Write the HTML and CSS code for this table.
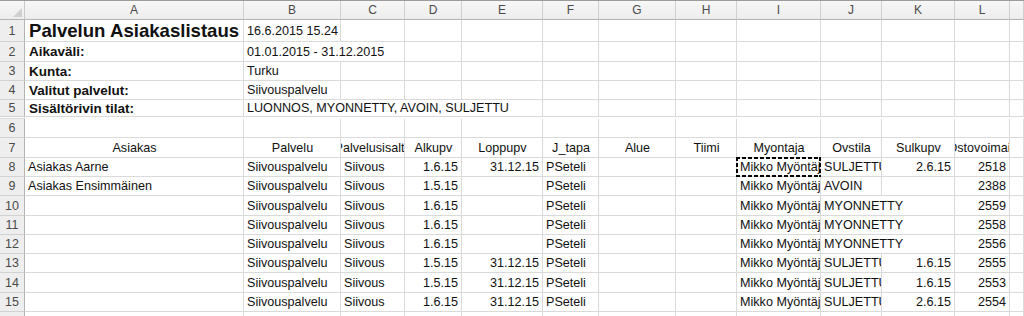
FILE: index.html
```html
<!DOCTYPE html>
<html lang="fi">
<head>
<meta charset="utf-8">
<title>Palvelun Asiakaslistaus</title>
<link rel="stylesheet" href="styles.css">
</head>
<body>
<div class="sheet">
  <div class="row colhdr">
    <div class="corner"><svg width="9" height="9" viewBox="0 0 9 9"><polygon points="9,0 9,9 0,9" fill="#cfcfcf"/></svg></div>
    <div class="ch">A</div><div class="ch">B</div><div class="ch">C</div><div class="ch">D</div><div class="ch">E</div><div class="ch">F</div><div class="ch">G</div><div class="ch">H</div><div class="ch">I</div><div class="ch">J</div><div class="ch">K</div><div class="ch">L</div><div class="ch"></div>
  </div>

  <div class="row h22">
    <div class="rh">1</div>
    <div class="c title">Palvelun Asiakaslistaus</div>
    <div class="c">16.6.2015 15.24</div>
    <div class="c"></div><div class="c"></div><div class="c"></div><div class="c"></div><div class="c"></div><div class="c"></div><div class="c"></div><div class="c"></div><div class="c"></div><div class="c"></div><div class="c"></div>
  </div>

  <div class="row h20">
    <div class="rh">2</div>
    <div class="c b">Aikaväli:</div>
    <div class="c span2">01.01.2015 - 31.12.2015</div>
    <div class="c"></div><div class="c"></div><div class="c"></div><div class="c"></div><div class="c"></div><div class="c"></div><div class="c"></div><div class="c"></div><div class="c"></div><div class="c"></div>
  </div>

  <div class="row h19">
    <div class="rh">3</div>
    <div class="c b">Kunta:</div>
    <div class="c">Turku</div>
    <div class="c"></div><div class="c"></div><div class="c"></div><div class="c"></div><div class="c"></div><div class="c"></div><div class="c"></div><div class="c"></div><div class="c"></div><div class="c"></div><div class="c"></div>
  </div>

  <div class="row h19">
    <div class="rh">4</div>
    <div class="c b">Valitut palvelut:</div>
    <div class="c">Siivouspalvelu</div>
    <div class="c"></div><div class="c"></div><div class="c"></div><div class="c"></div><div class="c"></div><div class="c"></div><div class="c"></div><div class="c"></div><div class="c"></div><div class="c"></div><div class="c"></div>
  </div>

  <div class="row h19">
    <div class="rh">5</div>
    <div class="c b">Sisältörivin tilat:</div>
    <div class="c span4">LUONNOS, MYONNETTY, AVOIN, SULJETTU</div>
    <div class="c"></div><div class="c"></div><div class="c"></div><div class="c"></div><div class="c"></div><div class="c"></div><div class="c"></div><div class="c"></div><div class="c"></div>
  </div>

  <div class="row h19">
    <div class="rh">6</div>
    <div class="c"></div><div class="c"></div><div class="c"></div><div class="c"></div><div class="c"></div><div class="c"></div><div class="c"></div><div class="c"></div><div class="c"></div><div class="c"></div><div class="c"></div><div class="c"></div><div class="c"></div>
  </div>

  <div class="row h20">
    <div class="rh">7</div>
    <div class="c ctr"><span>Asiakas</span></div>
    <div class="c ctr"><span>Palvelu</span></div>
    <div class="c ctr"><span>Palvelusisalto</span></div>
    <div class="c ctr"><span>Alkupv</span></div>
    <div class="c ctr"><span>Loppupv</span></div>
    <div class="c ctr"><span>J_tapa</span></div>
    <div class="c ctr"><span>Alue</span></div>
    <div class="c ctr"><span>Tiimi</span></div>
    <div class="c ctr"><span>Myontaja</span></div>
    <div class="c ctr"><span>Ovstila</span></div>
    <div class="c ctr"><span>Sulkupv</span></div>
    <div class="c ctr"><span>Ostovoimaid</span></div>
    <div class="c"></div>
  </div>

  <div class="row h19">
    <div class="rh">8</div>
    <div class="c">Asiakas Aarne</div>
    <div class="c">Siivouspalvelu</div>
    <div class="c">Siivous</div>
    <div class="c r">1.6.15</div>
    <div class="c r">31.12.15</div>
    <div class="c">PSeteli</div>
    <div class="c"></div><div class="c"></div>
    <div class="c copy"><span class="clip">Mikko Myöntäjä</span></div>
    <div class="c">SULJETTU</div>
    <div class="c r">2.6.15</div>
    <div class="c r">2518</div>
    <div class="c"></div>
  </div>

  <div class="row h19">
    <div class="rh">9</div>
    <div class="c">Asiakas Ensimmäinen</div>
    <div class="c">Siivouspalvelu</div>
    <div class="c">Siivous</div>
    <div class="c r">1.5.15</div>
    <div class="c r"></div>
    <div class="c">PSeteli</div>
    <div class="c"></div><div class="c"></div>
    <div class="c">Mikko Myöntäjä</div>
    <div class="c">AVOIN</div>
    <div class="c r"></div>
    <div class="c r">2388</div>
    <div class="c"></div>
  </div>

  <div class="row h20">
    <div class="rh">10</div>
    <div class="c"></div>
    <div class="c">Siivouspalvelu</div>
    <div class="c">Siivous</div>
    <div class="c r">1.6.15</div>
    <div class="c r"></div>
    <div class="c">PSeteli</div>
    <div class="c"></div><div class="c"></div>
    <div class="c">Mikko Myöntäjä</div>
    <div class="c span2">MYONNETTY</div>
    <div class="c r">2559</div>
    <div class="c"></div>
  </div>

  <div class="row h19">
    <div class="rh">11</div>
    <div class="c"></div>
    <div class="c">Siivouspalvelu</div>
    <div class="c">Siivous</div>
    <div class="c r">1.6.15</div>
    <div class="c r"></div>
    <div class="c">PSeteli</div>
    <div class="c"></div><div class="c"></div>
    <div class="c">Mikko Myöntäjä</div>
    <div class="c span2">MYONNETTY</div>
    <div class="c r">2558</div>
    <div class="c"></div>
  </div>

  <div class="row h19">
    <div class="rh">12</div>
    <div class="c"></div>
    <div class="c">Siivouspalvelu</div>
    <div class="c">Siivous</div>
    <div class="c r">1.6.15</div>
    <div class="c r"></div>
    <div class="c">PSeteli</div>
    <div class="c"></div><div class="c"></div>
    <div class="c">Mikko Myöntäjä</div>
    <div class="c span2">MYONNETTY</div>
    <div class="c r">2556</div>
    <div class="c"></div>
  </div>

  <div class="row h19">
    <div class="rh">13</div>
    <div class="c"></div>
    <div class="c">Siivouspalvelu</div>
    <div class="c">Siivous</div>
    <div class="c r">1.5.15</div>
    <div class="c r">31.12.15</div>
    <div class="c">PSeteli</div>
    <div class="c"></div><div class="c"></div>
    <div class="c">Mikko Myöntäjä</div>
    <div class="c">SULJETTU</div>
    <div class="c r">1.6.15</div>
    <div class="c r">2555</div>
    <div class="c"></div>
  </div>

  <div class="row h20">
    <div class="rh">14</div>
    <div class="c"></div>
    <div class="c">Siivouspalvelu</div>
    <div class="c">Siivous</div>
    <div class="c r">1.5.15</div>
    <div class="c r">31.12.15</div>
    <div class="c">PSeteli</div>
    <div class="c"></div><div class="c"></div>
    <div class="c">Mikko Myöntäjä</div>
    <div class="c">SULJETTU</div>
    <div class="c r">1.6.15</div>
    <div class="c r">2553</div>
    <div class="c"></div>
  </div>

  <div class="row h19">
    <div class="rh">15</div>
    <div class="c"></div>
    <div class="c">Siivouspalvelu</div>
    <div class="c">Siivous</div>
    <div class="c r">1.6.15</div>
    <div class="c r">31.12.15</div>
    <div class="c">PSeteli</div>
    <div class="c"></div><div class="c"></div>
    <div class="c">Mikko Myöntäjä</div>
    <div class="c">SULJETTU</div>
    <div class="c r">2.6.15</div>
    <div class="c r">2554</div>
    <div class="c"></div>
  </div>

  <div class="row h19">
    <div class="rh">16</div>
    <div class="c"></div><div class="c"></div><div class="c"></div><div class="c"></div><div class="c"></div><div class="c"></div><div class="c"></div><div class="c"></div><div class="c"></div><div class="c"></div><div class="c"></div><div class="c"></div><div class="c"></div>
  </div>
</div>
</body>
</html>
```

FILE: styles.css
```css
html, body {
  margin: 0;
  padding: 0;
  background: #ffffff;
  overflow: hidden;
}

.sheet {
  width: 1024px;
  font-family: "Liberation Sans", Arial, sans-serif;
  font-size: 12.6px;
  color: #111;
}

.row {
  display: grid;
  grid-template-columns: 25px 219px 97px 64px 57px 81px 56px 77px 61px 84px 61px 73px 55px 1fr;
}

.h19 { height: 19px; }
.h20 { height: 20px; }
.h22 { height: 22px; }

.colhdr {
  height: 20px;
  border-top: 1px solid #9c9c9c;
  box-sizing: border-box;
  background: linear-gradient(#f7f7f7, #ececec);
}

.corner {
  box-sizing: border-box;
  border-right: 1px solid #c9c9c9;
  border-bottom: 1px solid #b4b4b4;
  display: flex;
  align-items: flex-end;
  justify-content: flex-end;
  padding: 0 2px 2px 0;
}

.ch {
  box-sizing: border-box;
  border-right: 1px solid #d0d0d0;
  border-bottom: 1px solid #b4b4b4;
  display: flex;
  align-items: center;
  justify-content: center;
  color: #4a4a4a;
  font-size: 12px;
}

.rh {
  box-sizing: border-box;
  background: #eeeeee;
  border-right: 1px solid #b4b4b4;
  border-bottom: 1px solid #d2d2d2;
  display: flex;
  align-items: center;
  justify-content: center;
  color: #4a4a4a;
  font-size: 12.5px;
}

.c {
  position: relative;
  box-sizing: border-box;
  border-right: 1px solid #dadada;
  border-bottom: 1px solid #dadada;
  display: flex;
  align-items: center;
  padding: 0 2px 0 3px;
  white-space: nowrap;
  overflow: hidden;
}

.span2 { grid-column: span 2; }
.span4 { grid-column: span 4; }

.title {
  font-size: 18.6px;
  font-weight: bold;
  padding-left: 4px;
}

.b {
  font-weight: bold;
  font-size: 13.5px;
  padding-left: 4px;
}

.r { justify-content: flex-end; padding-right: 3px; }

.ctr { justify-content: center; }
.ctr span { flex: none; }

.copy {
  overflow: visible;
  padding-right: 0;
}
.clip {
  min-width: 0;
  overflow: hidden;
}
.copy::after {
  content: "";
  position: absolute;
  left: -1px;
  top: -1px;
  right: -1px;
  bottom: -1px;
  background:
    repeating-linear-gradient(90deg, #000 0 4px, transparent 4px 6px) top / 100% 2px no-repeat,
    repeating-linear-gradient(90deg, #000 0 4px, transparent 4px 6px) bottom / 100% 2px no-repeat,
    repeating-linear-gradient(180deg, #000 0 4px, transparent 4px 6px) left / 2px 100% no-repeat,
    repeating-linear-gradient(180deg, #000 0 4px, transparent 4px 6px) right / 2px 100% no-repeat;
  pointer-events: none;
}
```
